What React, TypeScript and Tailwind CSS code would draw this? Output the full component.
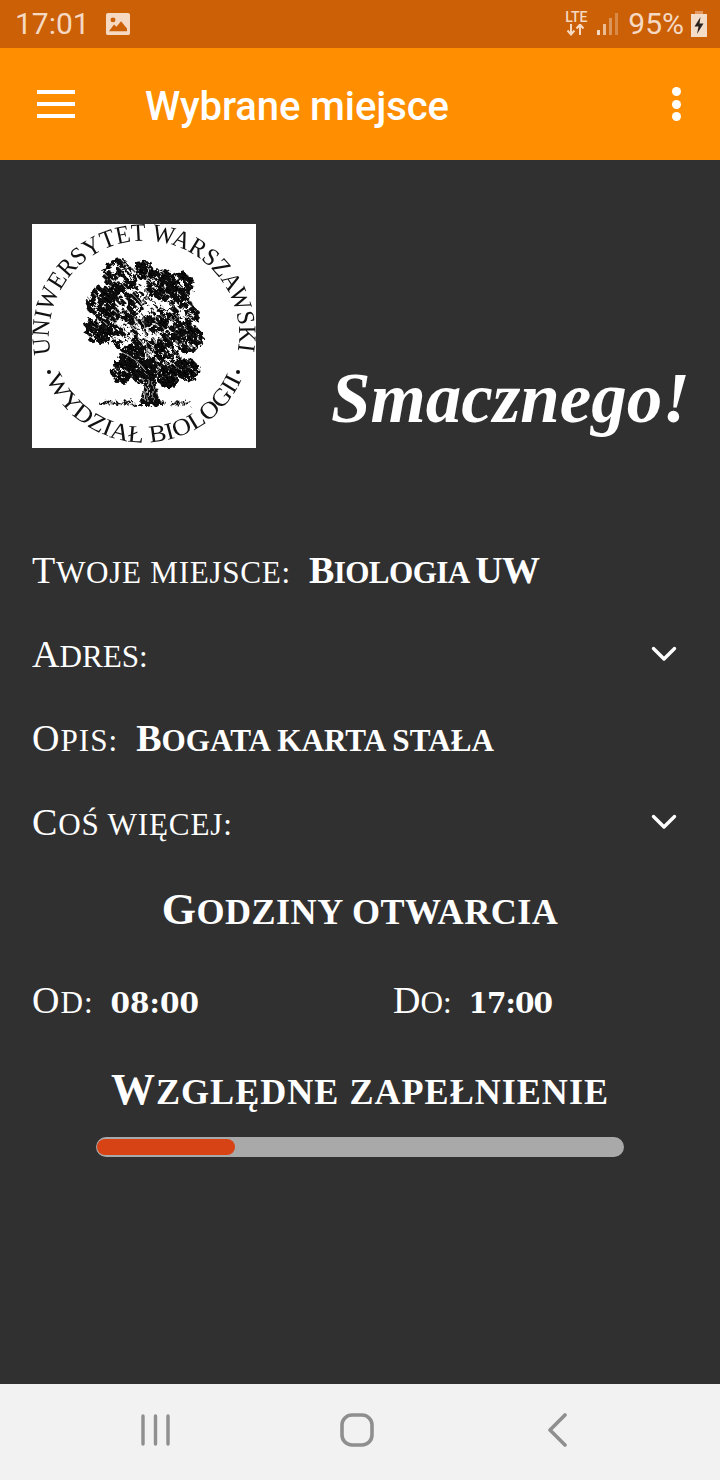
import React from "react";

function seeded(seed: number) {
  let s = seed;
  return () => {
    s = (s * 16807) % 2147483647;
    return (s - 1) / 2147483646;
  };
}

const lobes = [
  [88, 52, 15], [112, 46, 8], [130, 60, 13], [148, 62, 13], [70, 78, 14], [92, 76, 18],
  [120, 84, 22], [150, 92, 15], [66, 106, 12], [88, 106, 18], [122, 112, 20], [156, 114, 13],
  [100, 132, 10], [132, 134, 15], [90, 148, 10], [112, 150, 10], [136, 152, 10], [156, 146, 9],
];

function Tree() {
  const r = seeded(4711);
  const dark: React.ReactElement[] = [];
  const light: React.ReactElement[] = [];
  const ground: React.ReactElement[] = [];
  lobes.forEach(([cx, cy, rad], i) => {
    for (let k = 0; k < 130; k++) {
      const a = r() * Math.PI * 2;
      const d = Math.sqrt(r()) * rad * 1.1;
      dark.push(<circle key={`d${i}-${k}`} cx={cx + Math.cos(a) * d} cy={cy + Math.sin(a) * d} r={0.7 + r() * 1.7} />);
    }
    for (let k = 0; k < 9; k++) {
      const a = r() * Math.PI * 2;
      const d = Math.sqrt(r()) * rad;
      light.push(<circle key={`l${i}-${k}`} cx={cx + Math.cos(a) * d} cy={cy + Math.sin(a) * d} r={0.3 + r() * 0.6} />);
    }
  });
  for (let k = 0; k < 160; k++) {
    const x = 68 + r() * 90;
    const y = 179 + (r() - 0.5) * 7 * (1 - Math.abs(x - 113) / 60);
    ground.push(<circle key={`g${k}`} cx={x} cy={y} r={0.5 + r() * 0.8} />);
  }
  return (
    <g filter="url(#rough)">
      <path d="M107 181 C112 172 113 162 112 150 L110 136 L124 136 L124 150 C123 162 125 172 130 181 Z" fill="#111" />
      <g fill="#111">{ground}</g>
      <g fill="#080808">{dark}</g>
      <path d="M116 178 L117 156 M121 178 L121 158 M112 176 L114 162" stroke="#fff" strokeWidth="1" opacity="0.8" fill="none" />
      <g fill="#fff">{light}</g>
      <path d="M118 42 C110 60 120 74 112 92 C110 104 116 116 116 134 M84 96 C96 102 106 104 114 116 M148 88 C136 102 126 106 119 124 M92 62 C100 70 106 74 112 84 M84 126 C94 130 104 134 113 146 M150 130 C140 134 130 140 122 150" stroke="#fff" strokeWidth="0.9" fill="none" opacity="0.8" />
    </g>
  );
}

function Logo() {
  return (
    <div className="w-[224px] h-[224px] bg-white shrink-0">
      <svg width="224" height="224" viewBox="0 0 224 224" className="block blur-[0.5px]">
        <defs>
          <path id="arcTop" d="M 19 131 A 95 95 0 1 1 205 131" />
          <path id="arcBottom" d="M 13 152 A 107 107 0 0 0 211 152" />
          <filter id="rough" x="-5%" y="-5%" width="110%" height="110%">
            <feTurbulence type="fractalNoise" baseFrequency="0.22" numOctaves="2" seed="7" result="n" />
            <feDisplacementMap in="SourceGraphic" in2="n" scale="7" />
          </filter>
        </defs>
        <text fontFamily="'Liberation Serif', serif" fontSize="25" fill="#111">
          <textPath href="#arcTop" startOffset="1" textLength="332" lengthAdjust="spacingAndGlyphs">UNIWERSYTET WARSZAWSKI</textPath>
        </text>
        <text fontFamily="'Liberation Serif', serif" fontSize="24" fill="#111">
          <textPath href="#arcBottom" startOffset="3" textLength="246" lengthAdjust="spacingAndGlyphs">WYDZIAŁ BIOLOGII</textPath>
        </text>
        <circle cx="17" cy="148" r="2" fill="#111" />
        <circle cx="206" cy="148" r="2" fill="#111" />
        <Tree />
      </svg>
    </div>
  );
}

function Chevron() {
  return (
    <svg width="26" height="16" viewBox="0 0 26 16" fill="none" className="block">
      <path d="M2.5 2.5 L13 13 L23.5 2.5" stroke="#fff" strokeWidth="3.4" strokeLinecap="round" strokeLinejoin="round" />
    </svg>
  );
}

/* Small caps drawn with a larger lower-case run than the browser's synthetic small caps give. */
function Sc({ text, className = "" }: { text: string; className?: string }) {
  const runs = text.match(/\p{Lu}+|[^\p{Lu}]+/gu) ?? [];
  return (
    <span className={`uppercase whitespace-pre ${className}`}>
      {runs.map((run, i) =>
        /^\p{Lu}/u.test(run) ? (
          <span key={i}>{run}</span>
        ) : (
          <span key={i} className="text-[0.82em]">{run}</span>
        ),
      )}
    </span>
  );
}

function Digits({ children, className = "" }: { children: string; className?: string }) {
  return <span className={`font-['DejaVu_Serif',serif] font-bold text-[28px] leading-none mt-[7px] ${className}`}>{children}</span>;
}

function StatusBar() {
  const c = "#f5d9c2";
  return (
    <div className="h-12 bg-[#cb6006] flex items-center pl-[15px] pr-[13px] text-[#f5d9c2] font-['Roboto',sans-serif]">
      <span className="text-[30px] leading-none">17:01</span>
      <svg width="24" height="22" viewBox="0 0 24 24" preserveAspectRatio="none" className="ml-[16px] block">
        <path fillRule="evenodd" d="M2 0 H22 A2 2 0 0 1 24 2 V22 A2 2 0 0 1 22 24 H2 A2 2 0 0 1 0 22 V2 A2 2 0 0 1 2 0 Z M7 5 A2.5 2.5 0 1 0 7 10 A2.5 2.5 0 0 0 7 5 Z M3 20 H21 V17 L15 9 L10.5 15 L8 12.5 Z" fill={c} />
      </svg>
      <div className="flex-1" />
      <div className="flex flex-col items-center w-[24px] -mt-[3px]">
        <span className="text-[14px] leading-[14px] font-medium">LTE</span>
        <svg width="20" height="12" viewBox="0 0 20 12" className="block">
          <path d="M5 0 V10 M1.5 6.5 L5 10.5 L8.5 6.5 M14 11 V1 M10.5 4.5 L14 0.5 L17.5 4.5" stroke={c} strokeWidth="2" fill="none" />
        </svg>
      </div>
      <svg width="22" height="24" viewBox="0 0 22 24" className="ml-[9px] block">
        <rect x="0" y="18" width="3" height="5" fill={c} />
        <rect x="6" y="12" width="3" height="11" fill={c} opacity="0.75" />
        <rect x="12" y="6" width="3" height="17" fill={c} opacity="0.45" />
        <rect x="18" y="1" width="3" height="22" fill={c} opacity="0.35" />
      </svg>
      <span className="text-[30px] leading-none ml-[9px]">95%</span>
      <svg width="16" height="26" viewBox="0 0 16 26" className="ml-[7px] block">
        <rect x="4" y="0" width="8" height="4" fill="#e39a62" />
        <rect x="0" y="3" width="16" height="23" fill="#f3dcc8" />
        <path d="M9.5 6 L3.5 15.5 H7.5 L6 23 L12.5 12.5 H8.5 Z" fill="#2a2320" />
      </svg>
    </div>
  );
}

function AppBar() {
  return (
    <div className="h-28 bg-[#ff8f00] flex items-center text-white relative">
      <div className="w-[38px] ml-[37px] flex flex-col gap-2">
        <div className="h-1 bg-white" />
        <div className="h-1 bg-white" />
        <div className="h-1 bg-white" />
      </div>
      <span className="ml-[70px] text-[40px] tracking-[-0.1px] font-medium font-['Roboto',sans-serif] leading-none mt-[5px]">Wybrane miejsce</span>
      <div className="flex-1" />
      <div className="flex flex-col gap-[3.5px] mr-[39px]">
        <div className="w-[9px] h-[9px] rounded-full bg-white" />
        <div className="w-[9px] h-[9px] rounded-full bg-white" />
        <div className="w-[9px] h-[9px] rounded-full bg-white" />
      </div>
    </div>
  );
}

function NavBar() {
  return (
    <div className="h-24 bg-[#f2f2f2] flex items-center pl-[141px] pr-[153px] pb-[4px] justify-between">
      <svg width="29" height="32" viewBox="0 0 29 32" className="block">
        <path d="M2 2 V30 M14.5 2 V30 M27 2 V30" stroke="#8f8f8f" strokeWidth="3.4" strokeLinecap="round" />
      </svg>
      <svg width="34" height="34" viewBox="0 0 34 34" className="block -ml-[4px]">
        <rect x="2" y="2" width="30" height="30" rx="10" fill="none" stroke="#8f8f8f" strokeWidth="3.6" />
      </svg>
      <svg width="20" height="34" viewBox="0 0 20 34" className="block">
        <path d="M18 2 L3 17 L18 32" fill="none" stroke="#8f8f8f" strokeWidth="3.6" strokeLinecap="round" strokeLinejoin="round" />
      </svg>
    </div>
  );
}

export default function App() {
  return (
    <div className="w-[720px] h-[1480px] flex flex-col bg-[#303030] overflow-hidden">
      <StatusBar />
      <AppBar />
      <main className="flex-1 px-8 pt-16 text-white">
        <div className="flex items-end justify-between h-[224px]">
          <Logo />
          <span className="font-['Liberation_Serif',serif] italic font-bold text-[71px] leading-none mr-[-2px] mb-[14px]">Smacznego!</span>
        </div>
        <div className="font-['Liberation_Serif',serif] mt-20 text-[38px] leading-none">
          <div className="h-[84px] flex items-center gap-[18px]">
            <Sc text="Twoje miejsce:" className="tracking-[0.7px]" />
            <span className="font-bold"><Sc text="Biologia UW" className="tracking-[-0.6px]" /></span>
          </div>
          <div className="h-[84px] flex items-center justify-between pr-[11px]">
            <Sc text="Adres:" />
            <Chevron />
          </div>
          <div className="h-[84px] flex items-center gap-[18px]">
            <Sc text="Opis:" className="tracking-[1px]" />
            <span className="font-bold"><Sc text="Bogata karta stała" /></span>
          </div>
          <div className="h-[84px] flex items-center justify-between pr-[11px]">
            <Sc text="Coś więcej:" className="tracking-[0.8px]" />
            <Chevron />
          </div>
          <div className="h-[92px] flex items-center justify-center font-bold text-[44px]"><Sc text="Godziny otwarcia" className="tracking-[0.5px]" /></div>
          <div className="h-[88px] flex items-center">
            <div className="w-[361px] flex items-center gap-[17px]">
              <Sc text="Od:" className="tracking-[1px]" />
              <Digits>08:00</Digits>
            </div>
            <div className="flex items-center gap-[17px]">
              <Sc text="Do:" />
              <Digits className="tracking-[-1px]">17:00</Digits>
            </div>
          </div>
          <div className="h-[92px] flex items-center justify-center font-bold text-[44px]"><Sc text="Względne zapełnienie" className="tracking-[1px]" /></div>
        </div>
        <div className="mx-16 h-5 mt-[1px] rounded-full bg-[#a9a9a9] p-[2px] pl-[1px]">
          <div className="w-[138px] h-4 rounded-full bg-[#d84315]" />
        </div>
      </main>
      <NavBar />
    </div>
  );
}
